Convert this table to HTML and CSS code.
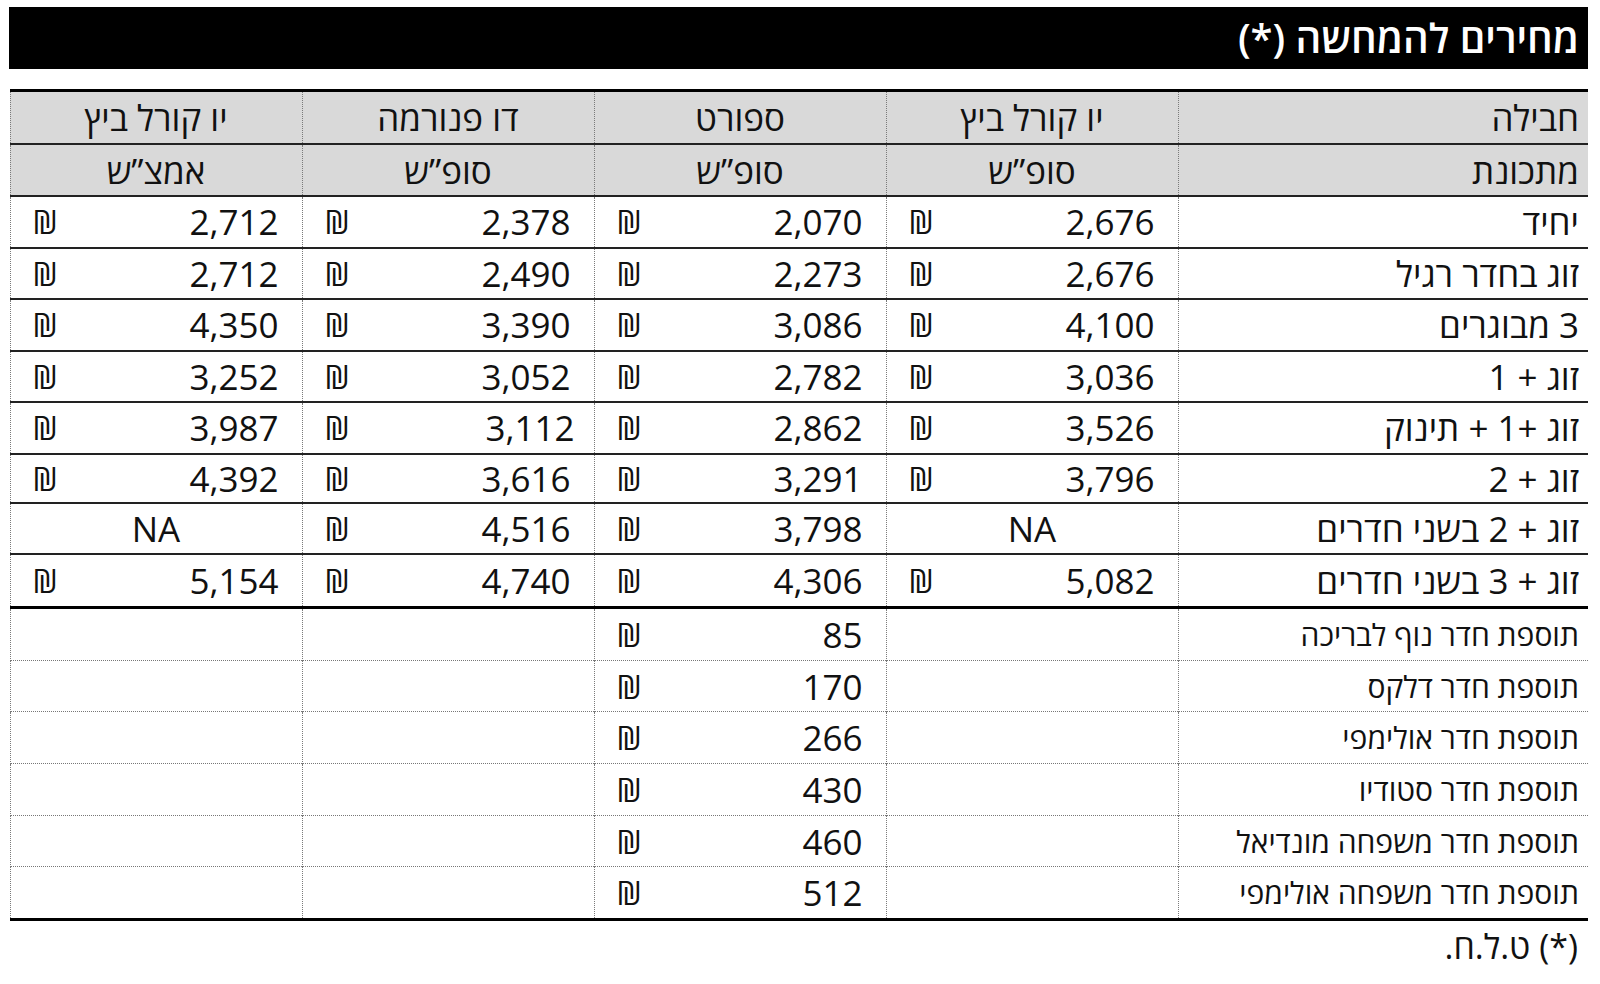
FILE: index.html
```html
<!DOCTYPE html>
<html lang="he" dir="rtl">
<head>
<meta charset="utf-8">
<title>מחירים להמחשה</title>
<link rel="stylesheet" href="styles.css">
</head>
<body>
<div class="page">
  <div class="title">מחירים להמחשה (*)</div>
  <table class="prices">
    <colgroup>
      <col class="c-label"><col class="c-data"><col class="c-data"><col class="c-data"><col class="c-data">
    </colgroup>
    <thead>
      <tr class="h1">
        <th class="lbl">חבילה</th>
        <th>יו קורל ביץ</th>
        <th>ספורט</th>
        <th>דו פנורמה</th>
        <th>יו קורל ביץ</th>
      </tr>
      <tr class="h2">
        <th class="lbl">מתכונת</th>
        <th>סופ”ש</th>
        <th>סופ”ש</th>
        <th>סופ”ש</th>
        <th>אמצ”ש</th>
      </tr>
    </thead>
    <tbody class="main">
      <tr>
        <td class="lbl">יחיד</td>
        <td><div class="p"><span>2,676</span><span class="s">₪</span></div></td>
        <td><div class="p"><span>2,070</span><span class="s">₪</span></div></td>
        <td><div class="p"><span>2,378</span><span class="s">₪</span></div></td>
        <td><div class="p"><span>2,712</span><span class="s">₪</span></div></td>
      </tr>
      <tr>
        <td class="lbl">זוג בחדר רגיל</td>
        <td><div class="p"><span>2,676</span><span class="s">₪</span></div></td>
        <td><div class="p"><span>2,273</span><span class="s">₪</span></div></td>
        <td><div class="p"><span>2,490</span><span class="s">₪</span></div></td>
        <td><div class="p"><span>2,712</span><span class="s">₪</span></div></td>
      </tr>
      <tr>
        <td class="lbl">3 מבוגרים</td>
        <td><div class="p"><span>4,100</span><span class="s">₪</span></div></td>
        <td><div class="p"><span>3,086</span><span class="s">₪</span></div></td>
        <td><div class="p"><span>3,390</span><span class="s">₪</span></div></td>
        <td><div class="p"><span>4,350</span><span class="s">₪</span></div></td>
      </tr>
      <tr>
        <td class="lbl">זוג + 1</td>
        <td><div class="p"><span>3,036</span><span class="s">₪</span></div></td>
        <td><div class="p"><span>2,782</span><span class="s">₪</span></div></td>
        <td><div class="p"><span>3,052</span><span class="s">₪</span></div></td>
        <td><div class="p"><span>3,252</span><span class="s">₪</span></div></td>
      </tr>
      <tr>
        <td class="lbl">זוג +1 + תינוק</td>
        <td><div class="p"><span>3,526</span><span class="s">₪</span></div></td>
        <td><div class="p"><span>2,862</span><span class="s">₪</span></div></td>
        <td><div class="p shift"><span>3,112</span><span class="s">₪</span></div></td>
        <td><div class="p"><span>3,987</span><span class="s">₪</span></div></td>
      </tr>
      <tr class="short">
        <td class="lbl">זוג + 2</td>
        <td><div class="p"><span>3,796</span><span class="s">₪</span></div></td>
        <td><div class="p"><span>3,291</span><span class="s">₪</span></div></td>
        <td><div class="p"><span>3,616</span><span class="s">₪</span></div></td>
        <td><div class="p"><span>4,392</span><span class="s">₪</span></div></td>
      </tr>
      <tr>
        <td class="lbl">זוג + 2 בשני חדרים</td>
        <td class="na">NA</td>
        <td><div class="p"><span>3,798</span><span class="s">₪</span></div></td>
        <td><div class="p"><span>4,516</span><span class="s">₪</span></div></td>
        <td class="na">NA</td>
      </tr>
      <tr class="tall">
        <td class="lbl">זוג + 3 בשני חדרים</td>
        <td><div class="p"><span>5,082</span><span class="s">₪</span></div></td>
        <td><div class="p"><span>4,306</span><span class="s">₪</span></div></td>
        <td><div class="p"><span>4,740</span><span class="s">₪</span></div></td>
        <td><div class="p"><span>5,154</span><span class="s">₪</span></div></td>
      </tr>
    </tbody>
    <tbody class="addons">
      <tr>
        <td class="lbl">תוספת חדר נוף לבריכה</td>
        <td></td>
        <td><div class="p"><span>85</span><span class="s">₪</span></div></td>
        <td></td>
        <td></td>
      </tr>
      <tr>
        <td class="lbl">תוספת חדר דלקס</td>
        <td></td>
        <td><div class="p"><span>170</span><span class="s">₪</span></div></td>
        <td></td>
        <td></td>
      </tr>
      <tr>
        <td class="lbl">תוספת חדר אולימפי</td>
        <td></td>
        <td><div class="p"><span>266</span><span class="s">₪</span></div></td>
        <td></td>
        <td></td>
      </tr>
      <tr>
        <td class="lbl">תוספת חדר סטודיו</td>
        <td></td>
        <td><div class="p"><span>430</span><span class="s">₪</span></div></td>
        <td></td>
        <td></td>
      </tr>
      <tr>
        <td class="lbl">תוספת חדר משפחה מונדיאל</td>
        <td></td>
        <td><div class="p"><span>460</span><span class="s">₪</span></div></td>
        <td></td>
        <td></td>
      </tr>
      <tr>
        <td class="lbl">תוספת חדר משפחה אולימפי</td>
        <td></td>
        <td><div class="p"><span>512</span><span class="s">₪</span></div></td>
        <td></td>
        <td></td>
      </tr>
    </tbody>
  </table>
  <div class="note">(*) ט.ל.ח.</div>
</div>
</body>
</html>
```

FILE: styles.css
```css
html, body {
  margin: 0;
  padding: 0;
  background: #fff;
}

body {
  font-family: "Open Sans", "Noto Sans", "DejaVu Sans", sans-serif;
  color: #111;
}

.page {
  direction: rtl;
  padding: 7px 12px 0 9px;
}

.title {
  background: #000;
  color: #fff;
  height: 62px;
  line-height: 62px;
  font-size: 40px;
  font-weight: 600;
  padding-right: 9px;
  white-space: nowrap;
}

.prices {
  width: 1578px;
  margin: 20px 0 0 auto;
  border-collapse: collapse;
  table-layout: fixed;
  border-top: 3px solid #000;
  border-left: 1px dotted #777;
  font-size: 35px;
}

.c-label { width: 410px; }
.c-data { width: 292px; }

.prices th,
.prices td {
  padding: 0;
  border-left: 1px dotted #7a7a7a;
  border-bottom: 2px solid #222;
  vertical-align: middle;
  white-space: nowrap;
}

.prices th {
  background: #d9d9d9;
  font-weight: normal;
  text-align: center;
}

.prices .lbl {
  text-align: right;
  padding-right: 9px;
  border-left: 1px dotted #7a7a7a;
}

.h1 th { height: 51px; }
.h2 th { height: 50px; }

.main td { height: 49.5px; }
.main tr.short td { height: 46px; }
.main tr.tall td { height: 51px; }
.main tr:last-child td { border-bottom: 3px solid #000; }

.p {
  display: flex;
  justify-content: space-between;
  align-items: center;
  padding: 0 23px 0 22px;
}

.p.shift { padding-right: 19px; }

.s {
  font-size: 32px;
}

.na {
  text-align: center;
}

.addons {
  font-size: 35px;
}

.addons td {
  height: 50.7px;
  border-bottom: 1px dotted #777;
}

.addons .lbl {
  font-size: 30px;
}

.addons tr:last-child td {
  border-bottom: 3px solid #000;
}

.note {
  font-size: 34px;
  padding-right: 10px;
  margin-top: 2px;
}
```
